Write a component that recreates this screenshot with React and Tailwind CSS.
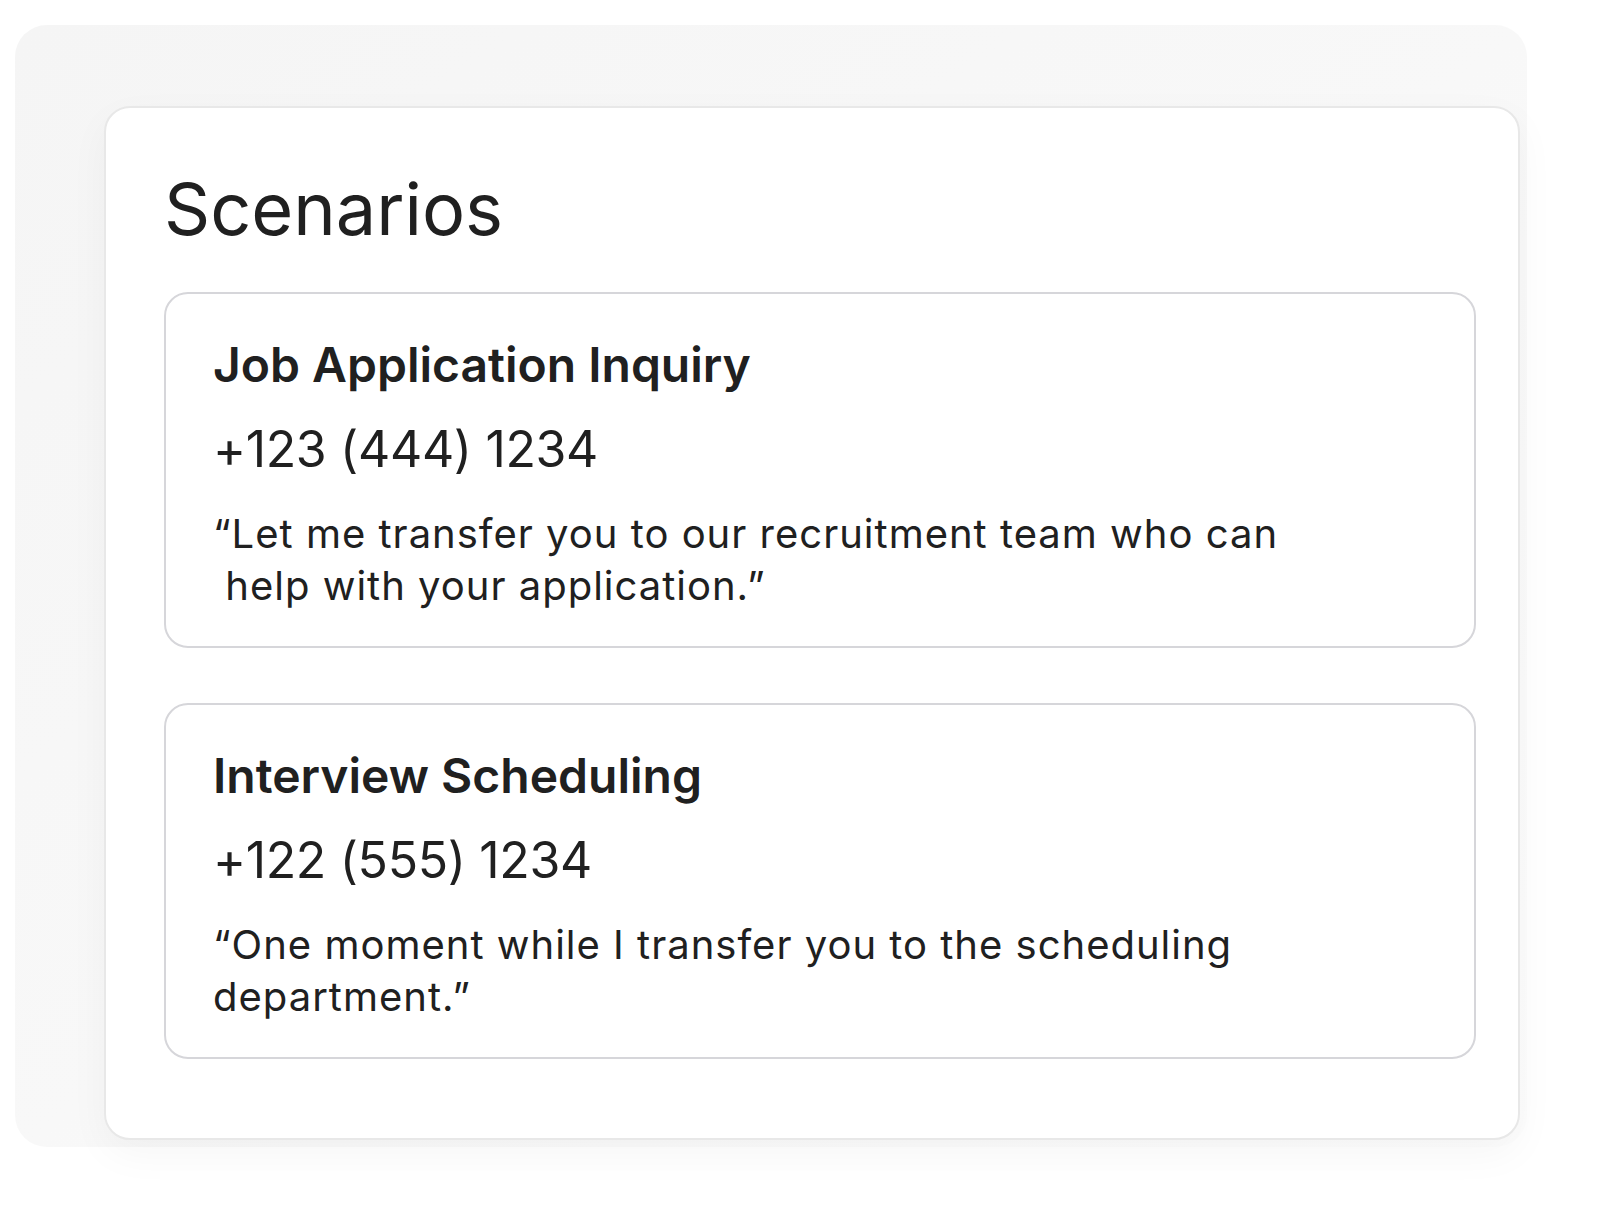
const SCENARIOS = [
  {
    id: 'job',
    title: 'Job Application Inquiry',
    phone: '+123 (444) 1234',
    lines: ['“Let me transfer you to our recruitment team who can', '\u00a0help with your application.”'],
  },
  {
    id: 'interview',
    title: 'Interview Scheduling',
    phone: '+122 (555) 1234',
    lines: ['“One moment while I transfer you to the scheduling', 'department.”'],
  },
]

function ScenarioCard({ scenario }) {
  return (
    <div className="w-[1312px] h-[356px] rounded-[24px] border-2 border-[#d6d6da] bg-white pl-[47px] pt-[47px] flex flex-col">
      <h3 className="text-[48px] leading-none font-semibold text-[#202020]">{scenario.title}</h3>
      <p className="mt-[35px] text-[50px] leading-none tracking-[-0.35px] text-[#202020]">{scenario.phone}</p>
      <p className="mt-[34px] text-[40px] leading-[52px] tracking-[1px] text-[#202020]">
        {scenario.lines[0]}
        <br />
        {scenario.lines[1]}
      </p>
    </div>
  )
}

export default function App() {
  return (
    <div className="w-[1598px] h-[1218px] bg-white font-['Inter',sans-serif] pl-[15px] pt-[25px]">
      {/* backdrop panel */}
      <div className="w-[1512px] h-[1122px] rounded-[32px] bg-linear-to-br from-[#f5f5f5] via-[#f8f8f8] to-[#fdfdfd] pl-[89px] pt-[81px]">
        {/* main card */}
        <div className="w-[1416px] h-[1034px] rounded-[26px] border-2 border-[#e8e8e8] bg-white shadow-[0_14px_40px_rgba(0,0,0,0.04)] pl-[58px] pt-[65px]">
          <h2 className="text-[72px] leading-none text-[#202020]">Scenarios</h2>
          <div className="mt-[47px] flex flex-col gap-[55px]">
            {SCENARIOS.map(s => (
              <ScenarioCard key={s.id} scenario={s} />
            ))}
          </div>
        </div>
      </div>
    </div>
  )
}
